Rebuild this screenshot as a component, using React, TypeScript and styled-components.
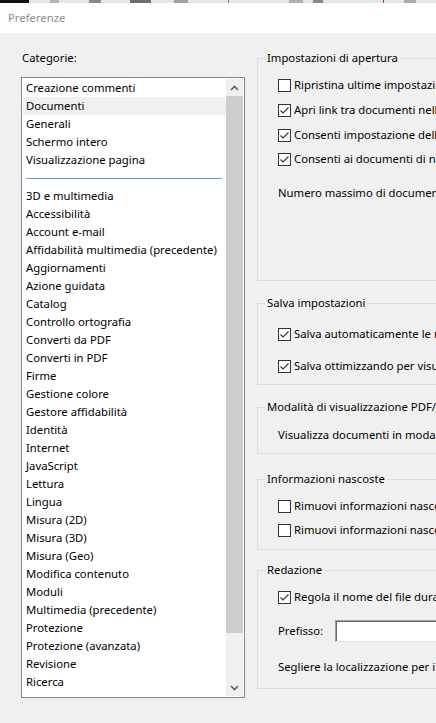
import React from 'react';
import styled, { createGlobalStyle } from 'styled-components';

const GlobalStyle = createGlobalStyle`
  html, body {
    margin: 0;
    padding: 0;
    background: #f0f0f0;
    overflow: hidden;
  }
  body {
    font-family: "Noto Sans", "Open Sans", sans-serif;
    font-size: 11.3px;
    color: #000;
  }
`;

type Item = { label: string; separator?: boolean; selected?: boolean };

const categories: Item[] = [
  { label: 'Creazione commenti' },
  { label: 'Documenti', selected: true },
  { label: 'Generali' },
  { label: 'Schermo intero' },
  { label: 'Visualizzazione pagina' },
  { label: '', separator: true },
  { label: '3D e multimedia' },
  { label: 'Accessibilità' },
  { label: 'Account e-mail' },
  { label: 'Affidabilità multimedia (precedente)' },
  { label: 'Aggiornamenti' },
  { label: 'Azione guidata' },
  { label: 'Catalog' },
  { label: 'Controllo ortografia' },
  { label: 'Converti da PDF' },
  { label: 'Converti in PDF' },
  { label: 'Firme' },
  { label: 'Gestione colore' },
  { label: 'Gestore affidabilità' },
  { label: 'Identità' },
  { label: 'Internet' },
  { label: 'JavaScript' },
  { label: 'Lettura' },
  { label: 'Lingua' },
  { label: 'Misura (2D)' },
  { label: 'Misura (3D)' },
  { label: 'Misura (Geo)' },
  { label: 'Modifica contenuto' },
  { label: 'Moduli' },
  { label: 'Multimedia (precedente)' },
  { label: 'Protezione' },
  { label: 'Protezione (avanzata)' },
  { label: 'Revisione' },
  { label: 'Ricerca' },
  { label: 'Servizi online Adobe' },
];

const CheckBox: React.FC<{ checked?: boolean }> = ({ checked }) => (
  <Box>
    {checked && (
      <svg width="11" height="11" viewBox="0 0 11 11">
        <polyline points="1.5,5.5 4,8 9.5,2.5" fill="none" stroke="#333" strokeWidth="1.1" />
      </svg>
    )}
  </Box>
);

const Chevron: React.FC<{ down?: boolean }> = ({ down }) => (
  <svg width="9" height="6" viewBox="0 0 9 6">
    <polyline
      points={down ? '1,1 4.5,4.5 8,1' : '1,5 4.5,1.5 8,5'}
      fill="none"
      stroke="#606060"
      strokeWidth="1.6"
    />
  </svg>
);

const App: React.FC = () => {
  return (
    <>
      <GlobalStyle />
      <Window>
        <TopStrip>
          <StripBlock $w={29} $c="#111" />
          <StripBlock $w={21} $c="#e6e6e6" />
          <StripBlock $w={9} $c="#b5b5b5" />
          <StripBlock $w={30} $c="#e6e6e6" />
          <StripBlock $w={12} $c="#8a8a8a" />
          <StripBlock $w={29} $c="#e6e6e6" />
          <StripBlock $w={21} $c="#6e6e6e" />
          <StripBlock $w={23} $c="#e6e6e6" />
          <StripBlock $w={14} $c="#a0a0a0" />
          <StripBlock $w={40} $c="#e6e6e6" />
          <StripBlock $w={1} $c="#777" />
          <StripBlock $w={60} $c="#e6e6e6" />
          <StripBlock $w={14} $c="#b0b0b0" />
          <StripBlock $w={10} $c="#e6e6e6" />
          <StripBlock $w={10} $c="#888" />
          <StripBlock $w={60} $c="#e6e6e6" />
          <StripBlock $w={1} $c="#c0304a" />
          <StripBlock $w={20} $c="#e6e6e6" />
          <StripBlock $w={12} $c="#aaa" />
          <StripBlock $w={40} $c="#e6e6e6" />
        </TopStrip>
        <TitleBar>Preferenze</TitleBar>

        <Content>
          <LeftColumn>
            <Label>Categorie:</Label>
            <ListBox>
              <ListItems>
                {categories.map((item, i) =>
                  item.separator ? (
                    <SeparatorRow key={i}>
                      <SeparatorLine />
                    </SeparatorRow>
                  ) : (
                    <ListRow key={i} $selected={item.selected}>
                      {item.label}
                    </ListRow>
                  )
                )}
              </ListItems>
              <ScrollBar>
                <ScrollButton>
                  <Chevron />
                </ScrollButton>
                <Track>
                  <Thumb />
                </Track>
                <ScrollButton>
                  <Chevron down />
                </ScrollButton>
              </ScrollBar>
            </ListBox>
          </LeftColumn>

          <RightColumn>
            <GroupBox $height={223} $mt={0}>
              <GroupTitle>Impostazioni di apertura</GroupTitle>
              <Row $mt={11}>
                <CheckBox />
                <RowText>Ripristina ultime impostazioni di visualizzazione alla riapertura dei documenti</RowText>
              </Row>
              <Row $mt={9}>
                <CheckBox checked />
                <RowText>Apri link tra documenti nella stessa finestra</RowText>
              </Row>
              <Row $mt={9}>
                <CheckBox checked />
                <RowText>Consenti impostazione dello stato di apertura dei documenti</RowText>
              </Row>
              <Row $mt={8}>
                <CheckBox checked />
                <RowText>Consenti ai documenti di nascondere la barra dei menu</RowText>
              </Row>
              <Row $mt={18}>
                <RowText $plain>Numero massimo di documenti nell'elenco dei file recenti:</RowText>
              </Row>
            </GroupBox>

            <GroupBox $height={82} $mt={22}>
              <GroupTitle>Salva impostazioni</GroupTitle>
              <Row $mt={15}>
                <CheckBox checked />
                <RowText>Salva automaticamente le modifiche del documento nel file temporaneo ogni</RowText>
              </Row>
              <Row $mt={16}>
                <CheckBox checked />
                <RowText>Salva ottimizzando per visualizzazione web veloce</RowText>
              </Row>
            </GroupBox>

            <GroupBox $height={47} $mt={22}>
              <GroupTitle>Modalità di visualizzazione PDF/A</GroupTitle>
              <Row $mt={12}>
                <RowText $plain>Visualizza documenti in modalità PDF/A:</RowText>
              </Row>
            </GroupBox>

            <GroupBox $height={71} $mt={25}>
              <GroupTitle>Informazioni nascoste</GroupTitle>
              <Row $mt={11}>
                <CheckBox />
                <RowText>Rimuovi informazioni nascoste alla chiusura del documento</RowText>
              </Row>
              <Row $mt={8}>
                <CheckBox />
                <RowText>Rimuovi informazioni nascoste all'invio del documento tramite e-mail</RowText>
              </Row>
            </GroupBox>

            <GroupBox $height={119} $mt={20}>
              <GroupTitle>Redazione</GroupTitle>
              <Row $mt={11}>
                <CheckBox checked />
                <RowText>Regola il nome del file durante il salvataggio del documento redatto</RowText>
              </Row>
              <FieldRow>
                <FieldLabel>Prefisso:</FieldLabel>
                <TextInput />
              </FieldRow>
              <Row $mt={17}>
                <RowText $plain>Segliere la localizzazione per i modelli di codice</RowText>
              </Row>
            </GroupBox>
          </RightColumn>
        </Content>
      </Window>
    </>
  );
};

const Window = styled.div`
  width: 436px;
  height: 723px;
  overflow: hidden;
  background: #f0f0f0;
`;

const TopStrip = styled.div`
  display: flex;
  height: 3px;
  background: #e6e6e6;
  overflow: hidden;
`;

const StripBlock = styled.div<{ $w: number; $c: string }>`
  flex: 0 0 ${({ $w }) => $w}px;
  background: ${({ $c }) => $c};
`;

const TitleBar = styled.div`
  height: 30px;
  background: #fff;
  padding-left: 8px;
  line-height: 29px;
  color: #8e8e8e;
`;

const Content = styled.div`
  display: flex;
  gap: 12px;
  padding: 17px 0 0 21px;
`;

const LeftColumn = styled.div`
  flex: 0 0 224px;
  min-width: 0;
  display: flex;
  flex-direction: column;
`;

const Label = styled.div`
  line-height: 16px;
  height: 16px;
  padding-left: 1px;
  margin-bottom: 11px;
`;

const ListBox = styled.div`
  box-sizing: border-box;
  width: 224px;
  height: 621px;
  border: 1px solid #828790;
  background: #fff;
  padding: 1px;
  display: flex;
  overflow: hidden;
`;

const ListItems = styled.div`
  flex: 1 1 0;
  min-width: 0;
  overflow: hidden;
`;

const ListRow = styled.div<{ $selected?: boolean }>`
  height: 18px;
  line-height: 18px;
  padding-left: 3px;
  white-space: nowrap;
  background: ${({ $selected }) => ($selected ? '#f0f0f0' : 'transparent')};
`;

const SeparatorRow = styled.div`
  height: 18px;
  display: flex;
  align-items: center;
  padding: 0 4px 0 3px;
`;

const SeparatorLine = styled.div`
  flex: 1;
  height: 1px;
  background: #5a9bd8;
`;

const ScrollBar = styled.div`
  flex: 0 0 17px;
  display: flex;
  flex-direction: column;
  background: #f0f0f0;
`;

const ScrollButton = styled.div`
  height: 17px;
  display: flex;
  align-items: center;
  justify-content: center;
`;

const Track = styled.div`
  flex: 1;
  display: flex;
  flex-direction: column;
`;

const Thumb = styled.div`
  height: 537px;
  background: #cdcdcd;
`;

const RightColumn = styled.div`
  flex: 1;
  min-width: 0;
  padding-top: 8px;
  display: flex;
  flex-direction: column;
`;

const GroupBox = styled.div<{ $height: number; $mt: number }>`
  box-sizing: border-box;
  height: ${({ $height }) => $height}px;
  margin-top: ${({ $mt }) => $mt}px;
  border: 1px solid #dcdcdc;
  border-right: none;
  padding-left: 20px;
  margin-right: -20px;
`;

const GroupTitle = styled.div`
  width: fit-content;
  margin: -9px 0 0 -13px;
  padding: 0 2px;
  height: 16px;
  line-height: 16px;
  background: #f0f0f0;
  white-space: nowrap;
`;

const Row = styled.div<{ $mt: number }>`
  display: flex;
  align-items: center;
  height: 16px;
  margin-top: ${({ $mt }) => $mt}px;
  white-space: nowrap;
`;

const Box = styled.div`
  box-sizing: border-box;
  flex: 0 0 13px;
  width: 13px;
  height: 13px;
  border: 1px solid #333;
  background: #fff;
  display: flex;
  align-items: center;
  justify-content: center;
`;

const RowText = styled.span<{ $plain?: boolean }>`
  margin-left: ${({ $plain }) => ($plain ? '0' : '3px')};
  line-height: 16px;
`;

const FieldRow = styled.div`
  display: flex;
  align-items: center;
  height: 22px;
  margin-top: 15px;
`;

const FieldLabel = styled.span`
  flex: 0 0 57px;
  line-height: 16px;
`;

const TextInput = styled.div`
  box-sizing: border-box;
  flex: 0 0 200px;
  height: 22px;
  background: #fff;
  border: 1px solid;
  border-color: #a0a0a0 #e3e3e3 #e3e3e3 #a0a0a0;
  box-shadow: inset 1px 1px 0 #696969;
`;

export default App;
